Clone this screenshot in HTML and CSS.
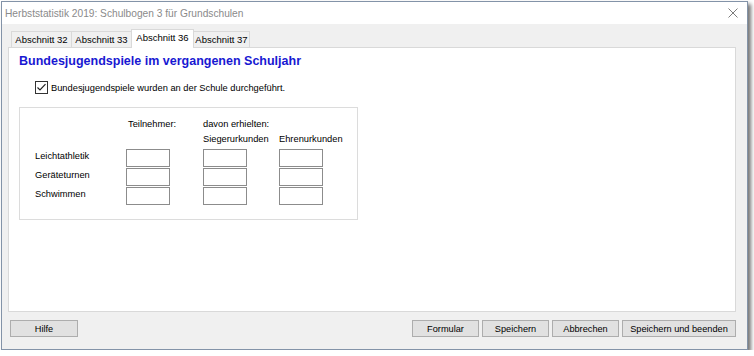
FILE: index.html
```html
<!DOCTYPE html>
<html lang="de">
<head>
  <meta charset="UTF-8">
  <title>Herbststatistik 2019</title>
  <link rel="stylesheet" href="styles.css">
</head>
<body>

  <div class="window">
    <div class="titlebar">
      <span class="title">Herbststatistik 2019: Schulbogen 3 für Grundschulen</span>
      <svg class="close" width="10" height="10" viewBox="0 0 10 10">
        <path d="M0.5 0.5 L9.5 9.5 M9.5 0.5 L0.5 9.5" stroke="#7c7c7c" stroke-width="1" fill="none"/>
      </svg>
    </div>

    <div class="content">
      <div class="tabs">
        <div class="tab t1">Abschnitt 32</div>
        <div class="tab t2">Abschnitt 33</div>
        <div class="tab active">Abschnitt 36</div>
        <div class="tab t4">Abschnitt 37</div>
      </div>

      <div class="panel">
        <h1 class="heading">Bundesjugendspiele im vergangenen Schuljahr</h1>

        <label class="check">
          <svg class="box" width="13" height="13" viewBox="0 0 13 13">
            <rect x="0.5" y="0.5" width="12" height="12" fill="#fff" stroke="#333"/>
            <path d="M2.5 6.5 L5 9 L10.5 3.2" stroke="#222" stroke-width="1.2" fill="none"/>
          </svg>
          <span>Bundesjugendspiele wurden an der Schule durchgeführt.</span>
        </label>

        <div class="group">
          <div class="grid">
            <div></div>
            <div class="head first">Teilnehmer:</div>
            <div class="head">davon erhielten:</div>
            <div></div>

            <div></div>
            <div></div>
            <div class="head">Siegerurkunden</div>
            <div class="head">Ehrenurkunden</div>

            <div class="lbl">Leichtathletik</div>
            <input type="text"><input type="text"><input type="text">

            <div class="lbl">Geräteturnen</div>
            <input type="text"><input type="text"><input type="text">

            <div class="lbl">Schwimmen</div>
            <input type="text"><input type="text"><input type="text">
          </div>
        </div>
      </div>

      <div class="footer">
        <button class="btn">Hilfe</button>
        <div class="spacer"></div>
        <button class="btn">Formular</button>
        <button class="btn">Speichern</button>
        <button class="btn">Abbrechen</button>
        <button class="btn wide">Speichern und beenden</button>
      </div>
    </div>
  </div>

</body>
</html>
```

FILE: styles.css
```css
body {
  margin: 0;
  background-color: #fff;
  font-family: "Liberation Sans", Arial, sans-serif;
  font-size: 9.3px;
  color: #000;
}
.window {
  box-sizing: border-box;
  width: 747px;
  height: 349px;
  margin: 1px 0 0 1px;
  border: 1px solid #8393a8;
  display: flex;
  flex-direction: column;
  box-shadow: 3px 3px 4px rgba(0,0,0,0.55);
}
.titlebar {
  height: 22px;
  background-color: #fff;
  display: flex;
  align-items: center;
  justify-content: space-between;
  padding: 0 9px 0 3px;
}
.title {
  font-size: 10.2px;
  color: #8a8a8a;
}
.content {
  flex: 1;
  background-color: #f0f0f0;
  padding: 5px 11px 12px 6px;
  display: flex;
  flex-direction: column;
}
.tabs {
  height: 18px;
  display: flex;
  align-items: flex-end;
  padding-left: 3px;
}
.tab {
  box-sizing: border-box;
  height: 16px;
  line-height: 15px;
  text-align: center;
  border: 1px solid #d9d9d9;
  border-bottom: none;
  background-color: #f0f0f0;
  font-size: 9.5px;
}
.t1 { width: 61px; }
.t2 { width: 61px; margin-left: -1px; }
.t4 { width: 57px; margin-left: -1px; }
.tab.active {
  position: relative;
  z-index: 1;
  width: 63px;
  height: 19px;
  margin-bottom: -1px;
  margin-left: -1px;
  line-height: 15px;
  background-color: #fff;
}
.panel {
  flex: 1;
  background-color: #fff;
  border: 1px solid #d9d9d9;
  padding: 6px 10px 0;
}
.heading {
  margin: 0;
  font-size: 12.5px;
  line-height: 15px;
  font-weight: bold;
  color: #1818d2;
}
.check {
  display: flex;
  align-items: center;
  height: 13px;
  margin: 12px 0 0 16px;
  gap: 3px;
}
.box {
  display: block;
}
.group {
  box-sizing: border-box;
  width: 339px;
  height: 113px;
  margin-top: 13px;
  border: 1px solid #dcdcdc;
  padding: 10px 0 0 15px;
}
.grid {
  display: grid;
  grid-template-columns: 91px 77px 76px 78px;
  grid-template-rows: 15px 16px 19px 19px 18px;
}
.head {
  line-height: 12px;
  white-space: nowrap;
}
.head.first {
  padding-left: 2px;
}
.lbl {
  line-height: 12px;
  padding-top: 1px;
}
.grid input {
  box-sizing: border-box;
  width: 44px;
  height: 18px;
  margin: 0;
  padding: 0;
  border: 1px solid #8c8c8c;
  background-color: #fff;
}
.footer {
  display: flex;
  gap: 3px;
  height: 17px;
  margin-top: 8px;
}
.spacer {
  flex: 1;
}
.btn {
  box-sizing: border-box;
  width: 67px;
  height: 17px;
  padding: 0;
  border: 1px solid #adadad;
  background-color: #e1e1e1;
  font-family: "Liberation Sans", Arial, sans-serif;
  font-size: 9.2px;
  color: #000;
}
.btn:first-child {
  width: 68px;
  margin-left: 2px;
}
.btn.wide {
  width: 114px;
}
```
